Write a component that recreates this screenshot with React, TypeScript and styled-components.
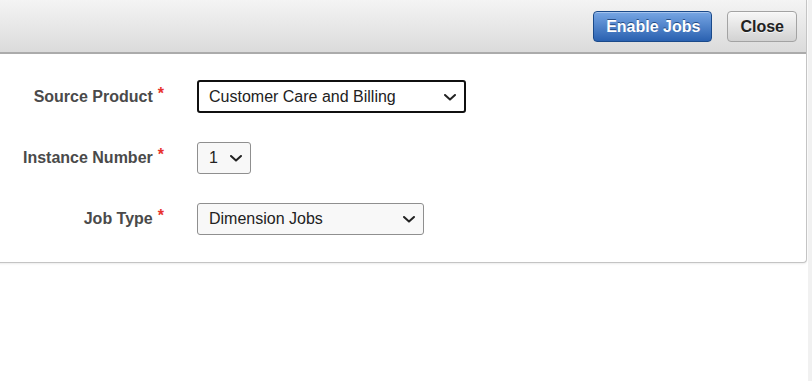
import { createGlobalStyle } from "styled-components";
import styled from "styled-components";

const GlobalStyle = createGlobalStyle`
  html, body {
    margin: 0;
    padding: 0;
    background: #ffffff;
    font-family: "Liberation Sans", Arial, sans-serif;
  }
`;

const Page = styled.div`
  display: flex;
  width: 812px;
  height: 381px;
  overflow: hidden;
  background: #ffffff;
`;

const Panel = styled.div`
  flex: 1;
  align-self: flex-start;
  margin-left: -6px;
  background: #ffffff;
  border: 1px solid #c4c4c4;
  border-top: none;
  border-radius: 0 0 4px 4px;
  box-shadow: 0 1px 2px rgba(0, 0, 0, 0.08);
`;

const Gutter = styled.div`
  width: 4px;
  margin-left: 1px;
  background: #f1f1f1;
`;

const Toolbar = styled.div`
  display: flex;
  justify-content: flex-end;
  align-items: center;
  gap: 15px;
  height: 52px;
  padding: 0 9px 0 0;
  background: linear-gradient(#f4f4f4, #dbdbdb);
  border-bottom: 2px solid #ababab;
`;

const Button = styled.button<{ $primary?: boolean }>`
  height: 31px;
  margin-top: 1px;
  padding: 0 ${(p) => (p.$primary ? "11px 0 12px" : "12px")};
  border-radius: 4px;
  font-family: "Liberation Sans", Arial, sans-serif;
  font-size: 16px;
  font-weight: bold;
  cursor: pointer;
  border: 1px solid ${(p) => (p.$primary ? "#1b4a8a" : "#a3a3a3")};
  color: ${(p) => (p.$primary ? "#ffffff" : "#222222")};
  background: ${(p) =>
    p.$primary
      ? "linear-gradient(#77a6e4, #2a61b0)"
      : "linear-gradient(#f7f7f7, #d2d2d2)"};
  text-shadow: ${(p) =>
    p.$primary ? "0 -1px 0 rgba(0, 30, 80, 0.6)" : "0 1px 0 rgba(255,255,255,0.6)"};
  box-shadow: inset 0 1px 0 rgba(255, 255, 255, 0.35);
`;

const Form = styled.div`
  display: grid;
  grid-template-columns: 169px max-content;
  column-gap: 33px;
  row-gap: 29px;
  align-items: center;
  padding: 26px 0 27px 0;
`;

const Label = styled.div`
  display: flex;
  justify-content: flex-end;
  align-items: flex-start;
  gap: 5px;
  font-size: 16px;
  font-weight: bold;
  color: #4a4a4a;
`;

const Required = styled.span`
  color: #e8322c;
  font-size: 16px;
  line-height: 1;
  position: relative;
  top: -2px;
`;

const Select = styled.div<{ $width: number; $focused?: boolean }>`
  position: relative;
  box-sizing: border-box;
  display: flex;
  align-items: center;
  width: ${(p) => p.$width}px;
  height: ${(p) => (p.$focused ? 33 : 32)}px;
  padding-left: ${(p) => (p.$focused ? 10 : 11)}px;
  border: ${(p) => (p.$focused ? "2px solid #101010" : "1px solid #8f8f8f")};
  border-radius: 3px;
  background: ${(p) => (p.$focused ? "#ffffff" : "#f8f8f8")};
  font-size: 16px;
  color: #222222;
`;

const Chevron = styled.svg`
  position: absolute;
  right: 8px;
  top: 50%;
  margin-top: -3px;
  width: 12px;
  height: 7px;
`;

const ChevronIcon = () => (
  <Chevron viewBox="0 0 12 7">
    <path
      d="M1 1 L6 5.6 L11 1"
      fill="none"
      stroke="#222"
      strokeWidth="2"
      strokeLinecap="round"
      strokeLinejoin="round"
    />
  </Chevron>
);

const fields = [
  { label: "Source Product", value: "Customer Care and Billing", width: 269, focused: true },
  { label: "Instance Number", value: "1", width: 54 },
  { label: "Job Type", value: "Dimension Jobs", width: 227 },
];

export default function App() {
  return (
    <>
      <GlobalStyle />
      <Page>
        <Panel>
          <Toolbar>
            <Button $primary>Enable Jobs</Button>
            <Button>Close</Button>
          </Toolbar>
          <Form>
            {fields.map((f) => (
              <>
                <Label key={f.label + "-l"}>
                  {f.label}
                  <Required>*</Required>
                </Label>
                <Select key={f.label + "-s"} $width={f.width} $focused={f.focused}>
                  {f.value}
                  <ChevronIcon />
                </Select>
              </>
            ))}
          </Form>
        </Panel>
        <Gutter />
      </Page>
    </>
  );
}
